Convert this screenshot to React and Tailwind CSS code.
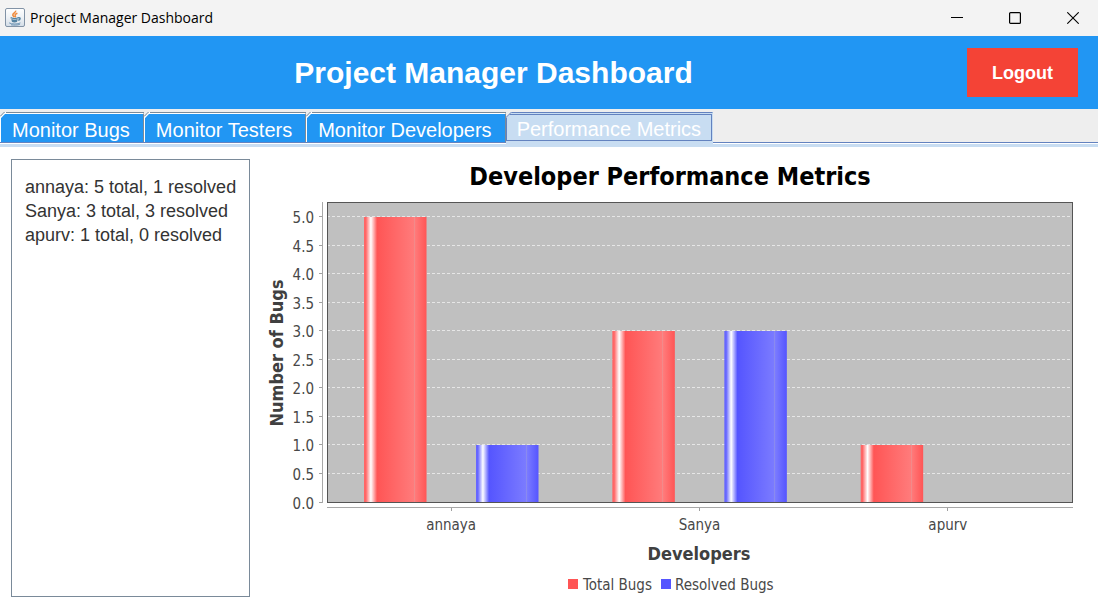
import { useState } from "react";

const developers = [
  { name: "annaya", total: 5, resolved: 1 },
  { name: "Sanya", total: 3, resolved: 3 },
  { name: "apurv", total: 1, resolved: 0 },
];

const tabs = ["Monitor Bugs", "Monitor Testers", "Monitor Developers", "Performance Metrics"];

function JavaIcon() {
  return (
    <svg width="20" height="20" viewBox="0 0 20 20" aria-hidden="true">
      <defs>
        <linearGradient id="iconPlate" x1="0" y1="0" x2="0" y2="1">
          <stop offset="0" stopColor="#ffffff" />
          <stop offset="0.5" stopColor="#eef2f6" />
          <stop offset="1" stopColor="#d3dde7" />
        </linearGradient>
      </defs>
      <rect x="0.5" y="0.5" width="19" height="18" rx="1.5" fill="url(#iconPlate)" stroke="#8293a6" />
      <path d="M10.6 2.6c.8 1.7-3.3 2.7-2.8 4.5.2.9 1.2 1.3 1.5 2.2M12.4 5.2c-1.6.6-2.8 1.4-2.2 2.3.5.7.6 1-.1 1.8" fill="none" stroke="#ee8a3c" strokeWidth="1.5" />
      <path d="M5.6 9.7c2 1 6 1 8 0M6.4 11.6c1.8.9 4.4.9 6.2 0M7 13.2c1.5.7 3.5.7 5 0M13.4 9.8c2.300-.4 2.300 1.800-.2 2.500" fill="none" stroke="#5382a1" strokeWidth="1.4" />
      <path d="M4.2 14.9c2 1.500 9.200 1.500 11.200 0M6 16.800c3 .5 6.500.4 8.800-.4" fill="none" stroke="#6f95b3" strokeWidth="1" />
    </svg>
  );
}

function TitleBar() {
  return (
    <div className="flex h-9 items-center justify-between bg-[#f3f3f3] pl-[5px] pr-[19px]">
      <div className="flex items-center gap-[5px]">
        <JavaIcon />
        <span className="font-['Open_Sans',sans-serif] text-sm leading-5 text-black">Project Manager Dashboard</span>
      </div>
      <div className="flex h-full gap-[46px] text-black">
        <button type="button" aria-label="Minimize" className="flex w-3 items-center justify-center">
          <svg width="12" height="12" viewBox="0 0 12 12"><path d="M0 5.500h12" stroke="currentColor" /></svg>
        </button>
        <button type="button" aria-label="Maximize" className="flex w-3 items-center justify-center">
          <svg width="12" height="12" viewBox="0 0 12 12"><rect x="0.600" y="0.600" width="10.800" height="10.800" rx="1" fill="none" stroke="currentColor" strokeWidth="1.2" /></svg>
        </button>
        <button type="button" aria-label="Close" className="flex w-3 items-center justify-center">
          <svg width="12" height="12" viewBox="0 0 12 12"><path d="M0.300 0.300l11.400 11.400M11.700 0.300L0.300 11.700" stroke="currentColor" strokeWidth="1.1" /></svg>
        </button>
      </div>
    </div>
  );
}

function Tab({ label, selected, onSelect }) {
  return selected ? (
    <button
      type="button"
      role="tab"
      aria-selected="true"
      onClick={onSelect}
      className="relative -mb-[5px] flex h-[35px] flex-col border-r border-t border-r-[#c8ddf2] border-t-[#6382bf] bg-[#c8ddf2]"
    >
      <span className="mt-px flex h-[27px] items-center border border-[#6382bf] px-[10px] pt-[3px] text-xl leading-6 text-white">{label}</span>
      <svg className="absolute -top-px left-0" width="6" height="6" viewBox="0 0 6 6" aria-hidden="true">
        <path d="M0 0h6L0 6z" fill="#eeeeee" />
        <path d="M0 5.500L5.500 0" stroke="#6382bf" />
      </svg>
    </button>
  ) : (
    <button
      type="button"
      role="tab"
      aria-selected="false"
      onClick={onSelect}
      className="relative flex h-[30px] items-center border-l border-t border-l-white border-t-[#7a8a99] bg-[#2196f3]"
    >
      <span className="flex h-full items-center border-r border-t border-r-[#7a8a99] border-t-white pl-[11px] pr-[13px] pt-[3px] text-xl leading-6 text-white">{label}</span>
      <svg className="absolute -left-px -top-px" width="6" height="6" viewBox="0 0 6 6" aria-hidden="true">
        <path d="M0 0h5L0 5z" fill="#eeeeee" />
        <path d="M0 6L6 0" stroke="#ffffff" strokeWidth="1.500" />
        <path d="M0 4.500L4.500 0" stroke="#7a8a99" />
      </svg>
    </button>
  );
}

const plot = { left: 327, right: 1072, top: 202, bottom: 502, unit: 57.1 };
const ticks = [0, 0.5, 1, 1.5, 2, 2.5, 3, 3.5, 4, 4.5, 5];

function BarGradient({ id, edge, base, light, seam }) {
  return (
    <linearGradient id={id}>
      <stop offset="0" stopColor={edge} />
      <stop offset="0.03" stopColor={edge} />
      <stop offset="0.11" stopColor="#ffffff" />
      <stop offset="0.21" stopColor={base} />
      <stop offset="0.8" stopColor={light} />
      <stop offset="0.8" stopColor={seam} />
      <stop offset="0.815" stopColor={seam} />
      <stop offset="0.815" stopColor={light} />
      <stop offset="1" stopColor={base} />
    </linearGradient>
  );
}

function PerformanceChart() {
  const band = (plot.right - plot.left) / developers.length;
  const barTop = (value) => Math.ceil(plot.bottom - value * plot.unit);
  return (
    <svg
      viewBox="261 159 827 438"
      role="img"
      aria-label="Developer Performance Metrics"
      className="h-auto w-full font-['DejaVu_Sans_Condensed','DejaVu_Sans',sans-serif]"
    >
      <defs>
        <BarGradient id="totalBar" edge="#ff6666" base="#ff5555" light="#ff7b7b" seam="#f28a8a" />
        <BarGradient id="resolvedBar" edge="#6666ff" base="#5555ff" light="#7b7bff" seam="#8a8aef" />
      </defs>
      <text x="670" y="185" textAnchor="middle" fontSize="25" fontWeight="bold" fill="#000000">Developer Performance Metrics</text>

      <rect x={plot.left} y={plot.top} width={plot.right - plot.left} height={plot.bottom - plot.top} fill="#c0c0c0" />
      {ticks.map((tick) => {
        const row = Math.floor(plot.bottom - tick * plot.unit) + 0.5;
        return (
          <g key={tick}>
            <path d={`M${plot.left} ${row}H${plot.right}`} stroke="#e6e6e6" strokeDasharray="3 2" />
            <path d={`M319 ${row}H322`} stroke="#a0a0a0" />
            <text x="314" y={row + 6} textAnchor="end" fontSize="15" fill="#484848">{tick.toFixed(1)}</text>
          </g>
        );
      })}

      {developers.map((dev, i) => {
        const start = plot.left + i * band + 37;
        const center = plot.left + (i + 0.5) * band;
        return (
          <g key={dev.name}>
            <rect x={start} y={barTop(dev.total)} width="62.500" height={plot.bottom - barTop(dev.total)} fill="url(#totalBar)" />
            <rect x={start + 112} y={barTop(dev.resolved)} width="62.500" height={plot.bottom - barTop(dev.resolved)} fill="url(#resolvedBar)" />
            <path d={`M${Math.floor(center) + 0.5} 507V511`} stroke="#a0a0a0" />
            <text x={center} y="530" textAnchor="middle" fontSize="15" fill="#484848">{dev.name}</text>
          </g>
        );
      })}

      <rect x={plot.left + 0.5} y={plot.top + 0.5} width={plot.right - plot.left} height={plot.bottom - plot.top} fill="none" stroke="#555555" />
      <path d="M322.500 202V503M327 507.500H1073" fill="none" stroke="#a8a8a8" />

      <text x="283" y="353" textAnchor="middle" fontSize="18" fontWeight="bold" fill="#404040" transform="rotate(-90 283 353)">Number of Bugs</text>
      <text x="699" y="560" textAnchor="middle" fontSize="18" fontWeight="bold" fill="#404040">Developers</text>

      <rect x="568" y="579" width="10" height="10" fill="#ff5555" />
      <text x="583" y="590" fontSize="15" fill="#484848">Total Bugs</text>
      <rect x="661" y="579" width="10" height="10" fill="#5555ff" />
      <text x="675" y="590" fontSize="15" fill="#484848">Resolved Bugs</text>
    </svg>
  );
}

export default function App() {
  const [active, setActive] = useState(3);
  const summary = developers.map((d) => `${d.name}: ${d.total} total, ${d.resolved} resolved`).join("\n");

  return (
    <div className="flex min-h-screen flex-col bg-white font-['Liberation_Sans',Arial,sans-serif]">
      <TitleBar />
      <header className="flex items-center bg-[#2196f3] px-5 py-3">
        <h1 className="flex-1 text-center text-[30px] font-bold leading-9 text-white">Project Manager Dashboard</h1>
        <button type="button" className="h-[49px] w-[111px] bg-[#f44336] text-lg font-bold leading-6 text-white">Logout</button>
      </header>
      <div className="border-b-[3px] border-[#c8ddf2]">
        <div role="tablist" className="mb-px flex border-b border-[#6382bf] bg-[#eeeeee] pt-[3px]">
          {tabs.map((label, i) => (
            <Tab key={label} label={label} selected={i === active} onSelect={() => setActive(i)} />
          ))}
        </div>
      </div>
      <main className="flex flex-1 items-stretch gap-[11px] py-3 pl-[11px] pr-[10px]">
        <textarea
          readOnly
          aria-label="Developer summary"
          value={summary}
          className="w-[239px] shrink-0 resize-none border border-[#7a8a99] bg-white pl-[13px] pr-2 py-[15px] text-lg leading-6 text-[#333333] outline-none"
        />
        <div className="min-w-0 flex-1">
          <PerformanceChart />
        </div>
      </main>
    </div>
  );
}
